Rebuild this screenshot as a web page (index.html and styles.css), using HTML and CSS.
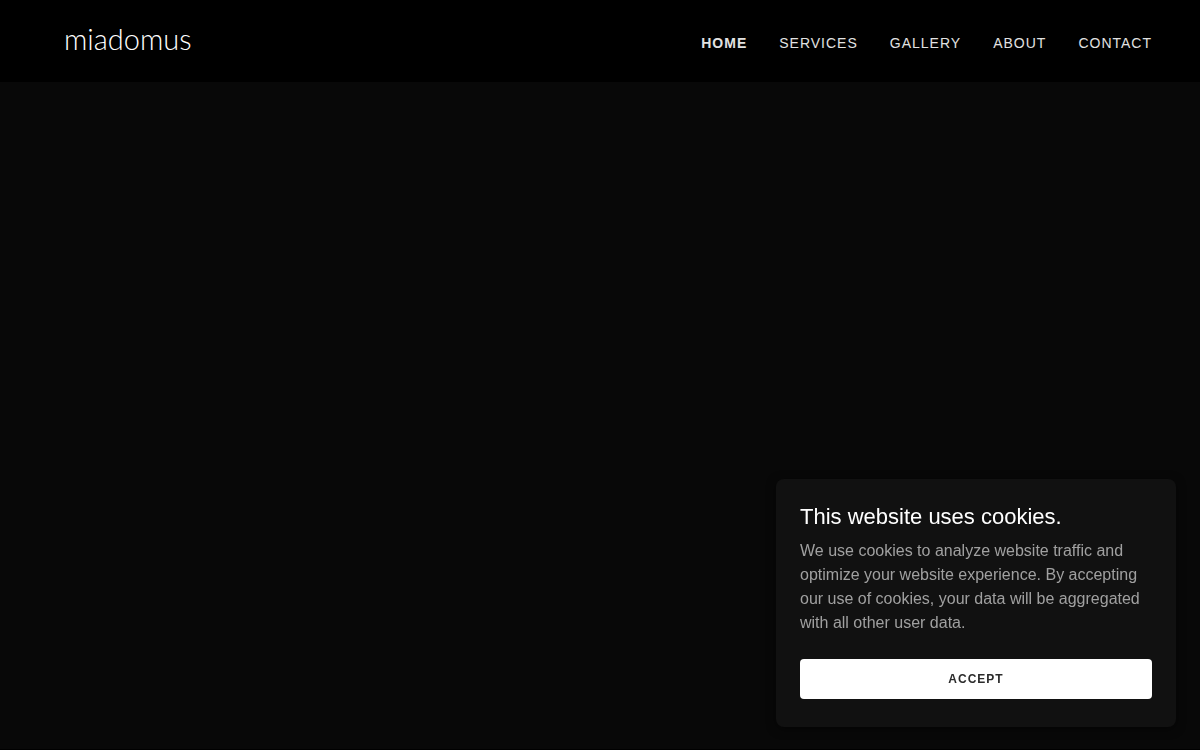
FILE: index.html
```html
<!DOCTYPE html>
<html lang="en">
<head>
    <meta charset="UTF-8">
    <meta name="viewport" content="width=device-width, initial-scale=1.0">
    <title>miadomus</title>
    <link rel="stylesheet" href="styles.css">
</head>
<body>
    <header class="site-header">
        <a class="logo" href="#">miadomus</a>
        <nav class="site-nav">
            <a class="active" href="#">Home</a>
            <a href="#">Services</a>
            <a href="#">Gallery</a>
            <a href="#">About</a>
            <a href="#">Contact</a>
        </nav>
    </header>

    <main class="hero"></main>

    <section class="cookie-banner" aria-labelledby="cookieTitle">
        <h2 id="cookieTitle">This website uses cookies.</h2>
        <p>We use cookies to analyze website traffic and optimize your website experience. By accepting our use of cookies, your data will be aggregated with all other user data.</p>
        <button class="accept-btn" type="button">Accept</button>
    </section>
</body>
</html>
```

FILE: styles.css
```css
* {
    box-sizing: border-box;
}
body {
    margin: 0;
    min-height: 100vh;
    display: flex;
    flex-direction: column;
    font-family: "Liberation Sans", Arial, sans-serif;
    background-color: #000;
    color: #fff;
}
a {
    color: inherit;
    text-decoration: none;
}
.site-header {
    display: flex;
    align-items: center;
    justify-content: space-between;
    min-height: 82px;
    padding: 0 48px 0 64px;
    background-color: #000;
}
.logo {
    padding-bottom: 4px;
    font-family: Lato, sans-serif;
    font-size: 29px;
    font-weight: 300;
    line-height: 40px;
}
.site-nav {
    display: flex;
    gap: 32px;
    padding-top: 4px;
    font-size: 14px;
    line-height: 20px;
    letter-spacing: 1px;
    text-transform: uppercase;
    color: #e2e2e2;
}
.site-nav .active {
    font-weight: bold;
}
.hero {
    flex: 1;
    border-bottom: 1px solid #000;
    background-color: #080808;
}
.cookie-banner {
    position: fixed;
    right: 24px;
    bottom: 23px;
    width: 400px;
    max-width: calc(100% - 48px);
    padding: 24px 24px 28px;
    border-radius: 8px;
    background-color: #111;
    box-shadow: 0 2px 10px rgba(0, 0, 0, 0.5);
}
.cookie-banner h2 {
    margin: 0 0 8px;
    font-size: 22px;
    font-weight: normal;
    line-height: 28px;
}
.cookie-banner p {
    margin: 0 0 24px;
    font-size: 16px;
    line-height: 24px;
    color: #a0a0a0;
}
.accept-btn {
    display: block;
    width: 100%;
    height: 40px;
    border: none;
    border-radius: 4px;
    background-color: #fff;
    color: #2b2b2b;
    font-family: inherit;
    font-size: 12px;
    font-weight: bold;
    letter-spacing: 1px;
    text-transform: uppercase;
    cursor: pointer;
}
```
